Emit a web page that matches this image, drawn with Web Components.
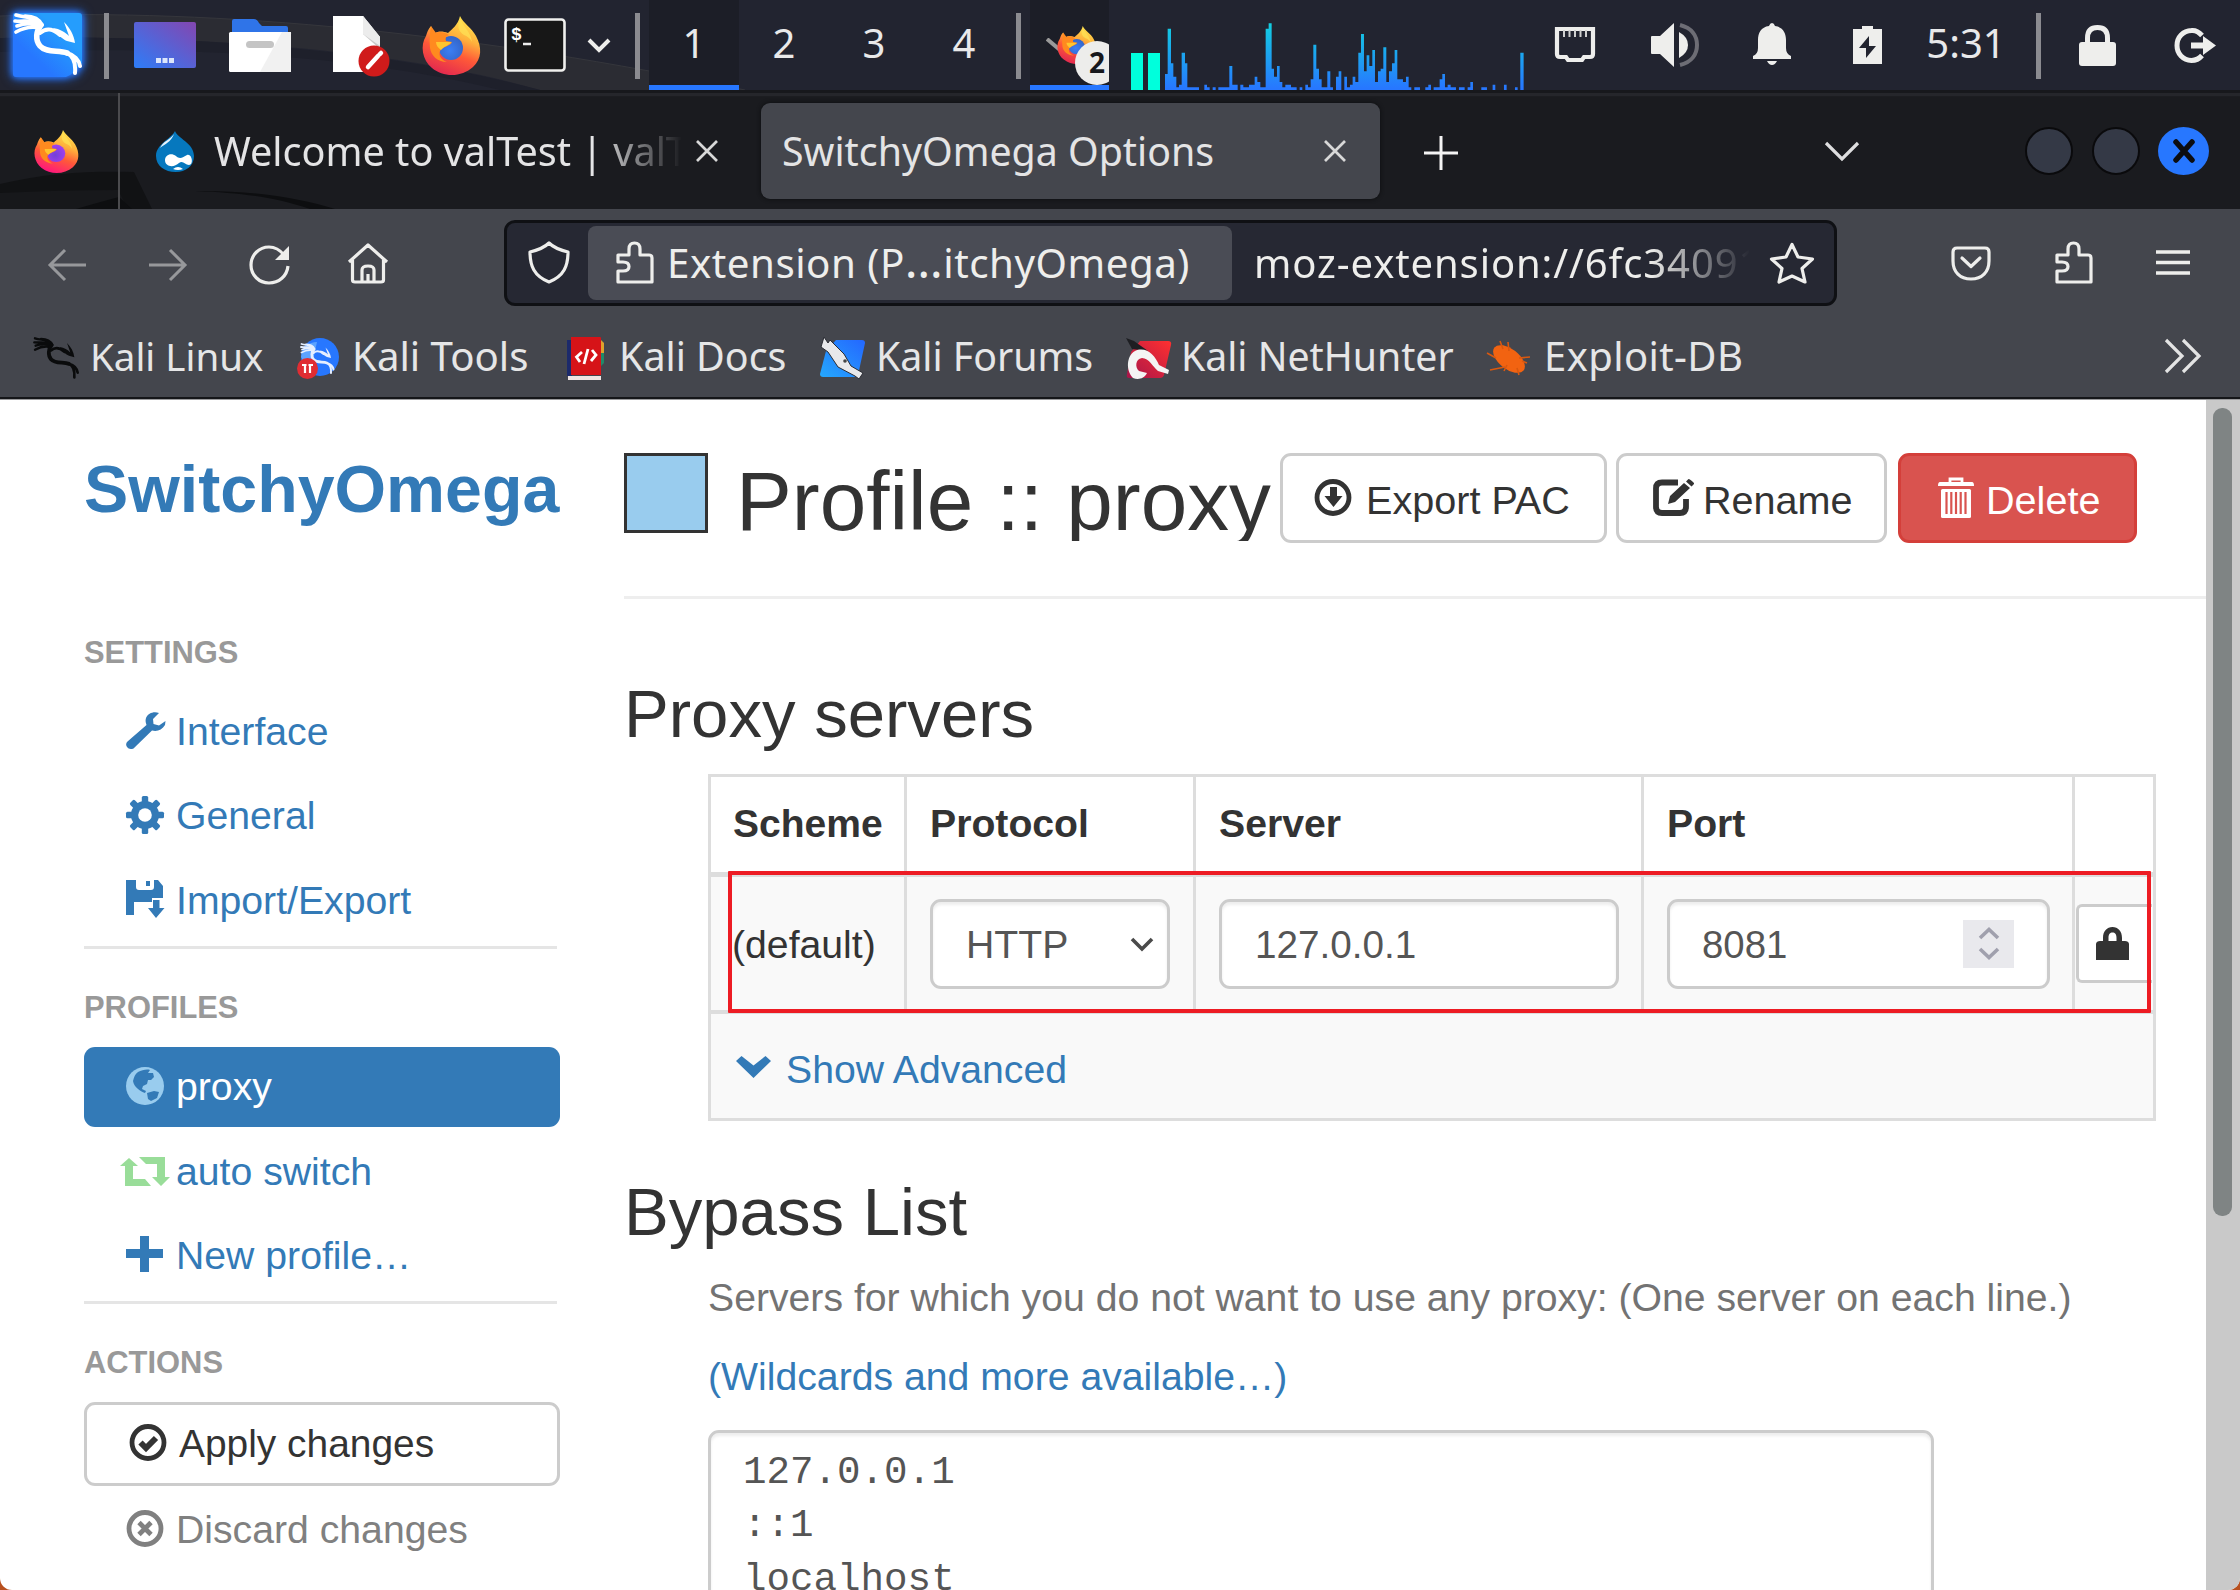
<!DOCTYPE html>
<html lang="en">
<head>
<meta charset="utf-8">
<title>SwitchyOmega Options</title>
<style>
html,body{margin:0;padding:0;background:#b8501f;width:2240px;height:1590px;overflow:hidden}
body{font-family:"Liberation Sans",Arial,sans-serif}
</style>
</head>
<body>
<desk-screen></desk-screen>
<script>
const DRAGON = (c) => `<g fill="none" stroke="${c}" stroke-linecap="round" stroke-linejoin="round">
<path stroke-width="3.6" d="M3 2C12 5 20 3 27 9M2 8C12 9 18 6 27 11M4 13C12 10 20 10 27 13M3 19C10 15 18 13 27 15M12 3C20 3 26 5 29 12"/>
<path stroke-width="5.600" d="M28 12C23 18 22 27 27 33C33 40 45 37 54 40"/>
<path stroke-width="4" d="M27 20C34 14 40 16 47 22M54 40C60 43 63 49 62 60M54 40C61 42 66 47 67 53"/>
</g><path fill="${c}" d="M40 15C47 16 52 19 56 23L51 9C57 15 61 22 62 30L54 28C49 26 45 22 40 15Z"/>`;
const FOX = (core, pink) => `<defs><linearGradient id="a" x1=".75" y1="0" x2=".35" y2="1"><stop offset="0" stop-color="#ffe94f"/><stop offset=".35" stop-color="#ffb03c"/><stop offset=".62" stop-color="#ff5a38"/><stop offset="1" stop-color="${pink}"/></linearGradient>
<radialGradient id="b" cx=".45" cy=".6" r=".6"><stop offset="0" stop-color="${core[0]}"/><stop offset="1" stop-color="${core[1]}"/></radialGradient></defs>
<path fill="url(#a)" d="M38 0C41 7 50 12 54 20C60 31 60 43 51 51C40 61 22 62 10 52C0 44-2 29 4 20C5 17 6 13 9 10C10 13 11 15 13 17C16 15 21 15 26 17C30 13 36 9 38 0Z"/>
<circle cx="29" cy="32" r="12" fill="url(#b)"/>
<path fill="#ff8a1f" d="M9 10L14 17C17 15 23 16 27 19C24 20 23 22 24 25L30 26C29 30 21 30 18 35C16 40 20 44 25 46C15 46 9 39 8 32C7 23 8 16 9 10Z"/>
<path fill="#ffc62e" d="M14 26L29 26C28 29 22 30 19 34C16 32 14 29 14 26Z"/>
<path fill="#ffe056" opacity=".75" d="M38 3C41 10 49 16 50 26C48 22 45 20 42 19C36 15 35 10 38 3Z"/>`;
const PUZZLE = `<path fill="none" stroke="currentColor" stroke-width="3.2" stroke-linejoin="round" d="M2 14H13V8C13 4 15 2 18.500 2S24 4 24 8V14H33C35 14 36 15 36 17V41H2V30H7C11 30 13 28 13 25.500S11 21 7 21H2Z"/>`;
const LOCKBODY = `<path fill="currentColor" d="M7 14V11C7 4 11 0 16.500 0S26 4 26 11V14H29C31 14 33 15 33 17V33H0V17C0 15 2 14 4 14ZM12.500 14H20.500V11C20.500 7 19 5.500 16.500 5.500S12.500 7 12.500 11Z"/>`;
const ring = `<circle cx="19" cy="18.500" r="16" fill="none" stroke="currentColor" stroke-width="4.800"/>`;

const ICONS = {
  kali: ['69 64', `<defs><linearGradient id="k" x1="0" y1="1" x2="1" y2="0"><stop offset=".3" stop-color="#2777ff"/><stop offset=".7" stop-color="#259dfd"/></linearGradient></defs><path fill="url(#k)" d="M2 0H66Q69 0 69 3V50Q60 62 53 64H3Q0 64 0 61V2Q0 0 2 0Z"/>${DRAGON('#fff')}`],
  desktop: ['62 46', `<defs><linearGradient id="d" x1="0" y1="1" x2="1" y2="0"><stop offset="0" stop-color="#2d7df8"/><stop offset="1" stop-color="#8446b0"/></linearGradient></defs><rect width="62" height="46" rx="2" fill="url(#d)"/><path d="M22 36h5v5h-5zM28.500 36h5v5h-5zM35 36h5v5h-5z" fill="#dce6fb"/>`],
  folder: ['62 53', `<path fill="#2f74e8" d="M3 2Q3 0 5 0H25Q28 0 30 4L33 7H57Q59 7 59 9V20H3Z"/><rect y="13" width="62" height="40" rx="1.500" fill="#fff"/><path fill="#f1f1f1" d="M53 13H62V53H31Z"/><rect x="17" y="22" width="28" height="7" rx="3.500" fill="#c4c4c4"/>`],
  doc: ['58 60', `<path fill="#fff" d="M1 0H31L48 21V56H1Z"/><path fill="#c9c9c9" d="M31 0L48 21V33L31 18Z"/><path fill="#ececec" d="M31 0V18L48 30V21Z"/><circle cx="42" cy="45" r="15.500" fill="#d01b1b"/><path d="M36 51L46 40M47.500 38.500L49 37" stroke="#fff" stroke-width="4.500" stroke-linecap="round"/>`],
  firefox: ['59 59', FOX(['#3b7ff5', '#3465c8'], '#e22850')],
  firefoxp: ['59 59', FOX(['#7240d8', '#a23ff0'], '#ff1480')],
  term: ['62 54', `<rect x="1.500" y="1.500" width="59" height="51" rx="3" fill="#171717" stroke="#f0f0ee" stroke-width="2.600"/><path d="M19 26H27" stroke="#eee" stroke-width="2.500"/>`],
  pchev: ['24 15', `<path d="M2 2L12 12L22 2" fill="none" stroke="#eeeeec" stroke-width="4"/>`],
  eth: ['40 35', `<path d="M2 2H38V27Q38 30 35 30H29L27 33H13L11 30H5Q2 30 2 27Z" fill="none" stroke="#eeeeec" stroke-width="4.200"/><path d="M9 3V10M14.500 3V10M20 3V10M25.500 3V10M31 3V10" stroke="#d0d0d0" stroke-width="2"/>`],
  vol: ['48 44', `<path fill="#eeeeec" d="M0 14Q0 13 1 13H9L23 0V44L9 31H1Q0 31 0 30Z"/><path fill="#eeeeec" d="M28 9Q37 14 37 22T28 35Z"/><path d="M29 2C41 5 46 13 46 22S41 39 29 42" fill="none" stroke="#6d6d75" stroke-width="4"/>`],
  bell: ['40 42', `<path fill="#eeeeec" d="M20 0Q22 0 23 3C31 4 34 10 34 17V25Q34 31 39 33V36H1V33Q6 31 6 25V17C6 10 9 4 17 3Q18 0 20 0Z"/><path fill="#eeeeec" d="M15 38H25Q23 42 20 42T15 38Z"/>`],
  batt: ['29 38', `<path fill="#eeeeec" d="M9 0H20V3H29V38H0V3H9Z"/><path fill="#22242f" d="M16 10L6 22H13V32L23 20H16Z"/>`],
  plock: ['37 41', `<path d="M8.500 20V13C8.500 6 12 2.500 18.500 2.500S28.500 6 28.500 13V20" fill="none" stroke="#eeeeec" stroke-width="5"/><rect y="17" width="37" height="24" rx="3" fill="#eeeeec"/>`],
  logout: ['42 35', `<path d="M28 7.500C24 3 20 2.200 17.500 2.500C9 3 3 9 3 17.500S9 32 17.500 32.500C22 32.500 25 31 28 27.500" fill="none" stroke="#eeeeec" stroke-width="5"/><path fill="#eeeeec" d="M17 14.500H29V8L42 17.500L29 27V20.500H17Z"/>`],
  drupal: ['39 41', `<path fill="#0678be" d="M19 0C21 7 38 12 38 25C38 35 30 41 19.500 41S0 35 0 25C0 13 15 8 19 0Z"/><path fill="#e8f4fc" d="M18 3C14 9 7 10 4 17C9 13 15 11 18 3Z"/><path fill="#fff" d="M9 29C9 24 15 21 20 25C24 29 27 26 31 24C36 22 38 34 33 34C29 34 27 29 23 32C18 37 9 36 9 29ZM17 38Q22 34 27 38Q22 40 17 38Z"/>`],
  x: ['24 24', `<path d="M2 2L22 22M22 2L2 22" stroke="#d8d8d8" stroke-width="2.700"/>`],
  plus1: ['36 36', `<path d="M18 1V35M1 18H35" stroke="#f4f4f4" stroke-width="3"/>`],
  tchev: ['36 21', `<path d="M2 2L18 18L34 2" fill="none" stroke="#dededf" stroke-width="3.200"/>`],
  back: ['40 34', `<path d="M39 17H3M18 2L3 17L18 32" fill="none" stroke="#97989b" stroke-width="3"/>`],
  fwd: ['40 34', `<path d="M1 17H37M22 2L37 17L22 32" fill="none" stroke="#97989b" stroke-width="3"/>`],
  reload: ['41 40', `<path d="M39 21C38 31 30 38 20 38C10 38 2 30 2 20S10 2 20 2C26 2 31 5 35 10" fill="none" stroke="#eeeeec" stroke-width="3.200"/><path fill="#eeeeec" d="M40 1V15H26Z"/>`],
  home: ['42 41', `<path d="M2 19L21 2L40 19M5.500 17V37Q5.500 39 8 39H34Q36.500 39 36.500 37V17M15 39V27Q15 23 21 23T27 27V39M21 31V39" fill="none" stroke="#eeeeec" stroke-width="3.200" stroke-linejoin="round"/>`],
  shield: ['42 43', `<path d="M21 2C25 6 32 9 40 11C40 25 36 35 21 41C6 35 2 25 2 11C10 9 17 6 21 2Z" fill="none" stroke="#eeeeec" stroke-width="3.200" stroke-linejoin="round"/>`],
  puzzle: ['38 43', PUZZLE],
  star: ['46 42', `<path d="M23 2.500L29 15L43.500 17L33 26.500L36 40L23 34L10 40L13 26.500L2.500 17L17 15Z" fill="none" stroke="#eeeeec" stroke-width="3.200" stroke-linejoin="round"/>`],
  pocket: ['40 35', `<path d="M6 2H34Q38 2 38 6V15C38 26 31 33 20 33S2 26 2 15V6Q2 2 6 2Z" fill="none" stroke="#eeeeec" stroke-width="3.200"/><path d="M11 12L20 20.500L29 12" fill="none" stroke="#eeeeec" stroke-width="3.200" stroke-linecap="round" stroke-linejoin="round"/>`],
  menu: ['34 25', `<path d="M0 2H34M0 12.500H34M0 23H34" stroke="#eeeeec" stroke-width="3.400"/>`],
  more: ['38 36', `<path d="M2 2L18 18L2 34M19 2L35 18L19 34" fill="none" stroke="#e4e4e4" stroke-width="3.200"/>`],
  bkali: ['69 64', DRAGON('#0a0b0c')],
  btools: ['42 41', `<circle cx="23" cy="19" r="19" fill="#2777ff"/><path fill="#6aaeff" d="M4 19C5 10 12 4 20 4L16 22L8 26Z" opacity=".8"/><g transform="translate(3 5) scale(.5)">${DRAGON('#e6efff')}</g><circle cx="10.500" cy="30.500" r="10.500" fill="#e02d33"/><path d="M5 27H9.500M11.500 27H16M8 27V35M13 27V35" stroke="#fff" stroke-width="2.200"/>`],
  bdocs: ['37 43', `<path fill="#1c2a6b" d="M0 3H5V39H0Z"/><path fill="#e0a22c" d="M33 2L37 6V16H33Z"/><path fill="#1f8a6a" d="M33 16H37V26L33 30Z"/><path fill="#d61318" d="M4 0H33Q34 0 34 1V38H4Z"/><path fill="#efe5e3" d="M1 39H34V43H1Z"/><path d="M15 15L9.500 20L13 25M25 13L29 18L24 24M21 12L17 27" fill="none" stroke="#fff" stroke-width="2.800"/>`],
  bforums: ['46 42', `<defs><linearGradient id="f" x1="0" y1="1" x2="1" y2="0"><stop offset="0" stop-color="#25a8fd"/><stop offset="1" stop-color="#2467ff"/></linearGradient></defs><path fill="url(#f)" d="M16 3H42Q45 3 45 6L38 38Q37 40 34 40H3Q0 40 0 37L6 14Z"/><path fill="#e8e8ea" stroke="#2a2c33" stroke-width="1" d="M1 10L4 0L8 6L10 3L24 17L31 29L43 36L39 42L35 39L18 30L8 15Z"/><circle cx="25" cy="24" r="1.800" fill="#444"/>`],
  bnet: ['46 41', `<defs><linearGradient id="n" x1="0" y1="1" x2="1" y2="0"><stop offset="0" stop-color="#a8154a"/><stop offset="1" stop-color="#ff3030"/></linearGradient></defs><path fill="url(#n)" d="M14 3H42Q46 3 45 7L38 37Q37 40 34 40H3Q0 40 1 36L5 14Z"/><path fill="#1d1e22" d="M0 0L8 3L22 13L6 11Z"/><path fill="#f4f4f4" d="M7 40C0 33 0 18 9 13C20 8 29 17 33 27L43 32L42 36L32 33C27 29 23 20 16 20C9 21 9 30 13 33L21 35C18 41 12 42 7 40Z"/>`],
  bexp: ['44 34', `<ellipse cx="22" cy="18" rx="18.500" ry="10" transform="rotate(38 22 18)" fill="#f26311"/><path d="M16 8L13 0M22 10L21 1M0 12L9 17M32 17L43 16M3 29L18 26M30 27L32 34M35 20L40 22M20 24L17 30" stroke="#d9580f" stroke-width="1.600"/>`],
  wrench: ['40 38', `<path fill="currentColor" d="M33 1C28-1 22 1 20 6C19 9 20 11 20.500 13L1.500 29.500Q-1 32 1 35T7.500 36.500L26 18.500C31 20 36 18 39 13L39.500 9L33 13.500L27.500 12L27 7Z"/>`],
  gear: ['38 38', `<g fill="currentColor"><circle cx="19" cy="19" r="14"/><rect x="15.800" y="0" width="6.400" height="38" rx="1.500"/><rect x="0" y="15.800" width="38" height="6.400" rx="1.500"/><g transform="rotate(45 19 19)"><rect x="15.800" y="0" width="6.400" height="38" rx="1.500"/><rect x="0" y="15.800" width="38" height="6.400" rx="1.500"/></g></g><circle cx="19" cy="19" r="6.800" fill="#fff"/>`],
  save: ['38 38', `<path fill="currentColor" d="M0 0H10V7Q10 10 13 10H25Q28 10 28 7V0H32L37 6V18H26V22H8V35H0Z"/><rect x="20" y="1" width="4" height="5" fill="currentColor"/><path fill="currentColor" d="M27 20H33.500V28H38.500L30 38L22 28H27Z"/>`],
  globe: ['38 38', `<circle cx="19" cy="19" r="19" fill="#9ce"/><path fill="#337ab7" d="M12 5C16 3 21 2 24 3L22 6L27 6L28 10L25 13L22 13L21 17L17 19L16 22L20 24L19 26C14 24 8 20 7 14C8 10 9 7 12 5ZM21 26L28 24L33 25L31 31L25 34L22 32Z"/>`],
  retweet: ['50 29', `<path fill="#9d9" d="M9 1L18 9H13V22H25L31 29H5V9H0ZM19 0H45V20H50L41 29L32 20H37V7H26Z"/>`],
  plus: ['37 36', `<path fill="currentColor" d="M14 0H23V13H37V22H23V36H14V22H0V13H14Z"/>`],
  ok: ['38 37', ring + `<path d="M11.500 18.500L17 24L27 14" fill="none" stroke="currentColor" stroke-width="6"/>`],
  remove: ['38 37', ring + `<path d="M13 12.500L25 24.500M25 12.500L13 24.500" stroke="currentColor" stroke-width="4.800"/>`],
  down: ['39 37', ring + `<path fill="currentColor" d="M16 8H23V17H28.500L19.500 28L10.500 17H16Z"/>`],
  edit: ['41 37', `<path d="M25 3.500H9Q3 3.500 3 9.500V28Q3 34 9 34H27Q33 34 33 28V20" fill="none" stroke="currentColor" stroke-width="5.800"/><path fill="currentColor" d="M15 25L17 17L31 4L37 9L22 23ZM33 2.500L35.500 0Q37 0 41 4V5L38.500 7.500Z"/>`],
  trash: ['36 41', `<path fill="none" stroke="#fff" stroke-width="2.800" d="M12 5V2H24V5"/><path fill="#fff" d="M2 5H34Q36 5 36 9H0Q0 5 2 5Z"/><rect x="3" y="12" width="30" height="29" rx="1.500" fill="#fff" /><path d="M8.500 15V37M13.300 15V37M18 15V37M22.700 15V37M27.500 15V37" stroke="#d9534f" stroke-width="2.200"/>`],
  schev: ['24 14', `<path d="M2 2L12 12L22 2" fill="none" stroke="#4a4a4a" stroke-width="3.600"/>`],
  lock: ['33 33', LOCKBODY],
  cdown: ['35 22', `<path fill="currentColor" d="M0 5L5.500 0L17.500 9.500L29.500 0L35 5L17.500 22Z"/>`],
  spin: ['22 33', `<path d="M2 11L11 2.500L20 11M2 22L11 30.500L20 22" fill="none" stroke="#a0a0ad" stroke-width="3.600"/>`],
};

/* Defines an element whose shadow root is cloned from a template. */
function define(name, css, html) {
  const tpl = document.createElement('template');
  tpl.innerHTML = `<style>${css}</style>${html}`;
  customElements.define(name, class extends HTMLElement {
    constructor() {
      super();
      this.attachShadow({ mode: 'open' }).append(tpl.content.cloneNode(true));
    }
  });
}

/* <ui-icon name w h>: vector icon, box size defaults to the viewBox. */
customElements.define('ui-icon', class extends HTMLElement {
  connectedCallback() {
    if (this.shadowRoot) return;
    const [box, body] = ICONS[this.getAttribute('name')];
    const [vw, vh] = box.split(' ');
    const w = this.getAttribute('w') || vw, h = this.getAttribute('h') || vh;
    this.attachShadow({ mode: 'open' }).innerHTML =
      `<style>:host{display:block;flex:none;width:${w}px;height:${h}px}svg{display:block;overflow:visible}</style>
       <svg width="${w}" height="${h}" viewBox="0 0 ${box}" preserveAspectRatio="none">${body}</svg>`;
  }
});

/* CPU history strip drawn from [start, end, top] triples. */
customElements.define('cpu-graph', class extends HTMLElement {
  connectedCallback() {
    if (this.shadowRoot) return;
    const d = '164,172,222 172,182,86 182,189,190 189,198,230 198,206,262 206,214,254 214,224,158 224,231,190 231,266,262 282,290,254 290,298,262 307,316,262 324,357,262 357,366,198 366,382,254 390,399,254 399,416,262 416,433,254 433,441,230 441,450,246 450,466,262 466,475,86 475,484,70 484,491,206 491,500,230 500,508,198 508,516,246 516,525,262 525,542,254 542,559,262 568,576,262 585,593,254 593,601,262 601,609,238 609,618,134 618,626,206 626,634,238 634,651,262 651,660,214 660,668,262 677,685,230 685,693,214 702,710,230 710,719,262 719,727,254 727,735,230 735,744,246 744,752,158 752,761,102 761,769,214 769,777,166 777,786,198 786,794,150 794,803,246 803,811,214 811,819,206 819,828,142 828,836,246 836,845,214 845,853,190 853,861,150 861,878,238 878,887,246 887,895,230 895,903,262 912,929,262 945,954,262 954,962,254 970,988,262 988,996,238 996,1004,222 1004,1012,262 1012,1021,254 1021,1037,262 1046,1063,262 1072,1080,262 1080,1088,246 1113,1130,262 1147,1155,254 1181,1189,254 1214,1222,262 1230,1240,158'
      .split(' ').map(s => { const [a, b, t] = s.split(','); return `M${a} 270V${t}H${b}V270Z`; }).join('');
    this.attachShadow({ mode: 'open' }).innerHTML = `<style>:host{display:block;flex:none}svg{display:block}</style>
      <svg width="359.300" height="67" viewBox="164 69 1078 201"><defs><linearGradient id="g" gradientUnits="userSpaceOnUse" x1="0" y1="70" x2="0" y2="265"><stop offset="0" stop-color="#12cfe0"/><stop offset="1" stop-color="#2777ff"/></linearGradient></defs><path fill="url(#g)" d="${d}"/></svg>`;
  }
});

define('panel-sep', `:host{display:block;flex:none;width:5px;height:66px;margin-top:13px;background:#8b8b90}`, ``);

define('work-space', `:host{display:block;box-sizing:border-box;flex:none;width:90px;height:90px;text-align:center;font-size:40px;line-height:86px;color:#e9e9ea}
:host([active]){background:#1c1e27;border-bottom:5px solid #2777ff}`, `<slot></slot>`);

define('top-panel', `:host{display:flex;position:relative;align-items:flex-start;height:90px;background:#222430;font-family:"Noto Sans",sans-serif;overflow:hidden}
.wall{position:absolute;left:0;top:0}
.row{position:relative;display:flex;align-items:flex-start;width:2240px}
.glow{filter:drop-shadow(0 0 3px #2777ff) drop-shadow(0 0 5px #2777ff)}
.term{position:relative}.term span{position:absolute;left:7px;top:6px;font:700 18px/22px "Liberation Mono",monospace;color:#fff}
.task{position:relative;flex:none;box-sizing:border-box;width:79px;height:90px;margin-left:8px;background:#1c1e27;border-bottom:5px solid #2777ff;overflow:hidden}
.task .line{position:absolute;left:16px;top:38px}
.task ui-icon{position:absolute;left:27px;top:26px}
.task b{position:absolute;left:45px;top:41px;width:44px;height:44px;border-radius:50%;background:#ededeb;color:#17181c;font-size:28px;line-height:43px;text-align:center}
.bar{flex:none;width:12px;height:37px;margin-top:53px;background:#00ffdc}
.time{flex:none;width:79px;font-size:40px;line-height:86px;color:#e9e9ea;white-space:nowrap}`,
`<svg class="wall" width="800" height="90"><path fill="#2b2c33" d="M0 16C220 8 480 34 745 90H540C400 50 200 34 0 38Z"/><path fill="none" stroke="#35363c" d="M0 16C220 8 480 34 745 90"/><path fill="#1e202b" d="M0 38C200 34 400 52 540 90H500C360 56 200 46 0 52Z"/></svg>
<div class="row">
<ui-icon class="glow" name="kali" style="margin:13px 0 0 13px"></ui-icon>
<panel-sep style="margin-left:22px"></panel-sep>
<ui-icon name="desktop" style="margin:22px 0 0 25px"></ui-icon>
<ui-icon name="folder" style="margin:19px 0 0 33px"></ui-icon>
<ui-icon name="doc" style="margin:16px 0 0 41px"></ui-icon>
<ui-icon name="firefox" style="margin:16px 0 0 32px"></ui-icon>
<div class="term" style="margin:18px 0 0 23px"><ui-icon name="term"></ui-icon><span>$</span></div>
<ui-icon name="pchev" style="margin:38px 0 0 21px"></ui-icon>
<panel-sep style="margin-left:24px"></panel-sep>
<work-space active style="margin-left:9px">1</work-space><work-space>2</work-space><work-space>3</work-space><work-space>4</work-space>
<panel-sep style="margin-left:7px"></panel-sep>
<div class="task" style="margin-left:9px"><svg class="line" width="16" height="14"><path d="M1 1L14 12" stroke="#9a9a9a" stroke-width="4"/></svg><ui-icon name="firefox" w="40" h="38"></ui-icon><b>2</b></div>
<div class="bar" style="margin-left:22px"></div><div class="bar" style="margin-left:5px"></div>
<cpu-graph style="margin:23px 0 0 5px"></cpu-graph>
<ui-icon name="eth" style="margin:27px 0 0 31px"></ui-icon>
<ui-icon name="vol" style="margin:23px 0 0 56px"></ui-icon>
<ui-icon name="bell" style="margin:23px 0 0 53px"></ui-icon>
<ui-icon name="batt" style="margin:26px 0 0 61px"></ui-icon>
<div class="time" style="margin-left:44px">5:31</div>
<panel-sep style="margin-left:31px"></panel-sep>
<ui-icon name="plock" style="margin:25px 0 0 38px"></ui-icon>
<ui-icon name="logout" style="margin:28px 0 0 58px"></ui-icon>
</div>`);

define('browser-tab', `:host{display:flex;align-items:center;flex:none;box-sizing:border-box;height:96px;border-radius:9px;color:#e4e4e5;font-size:39.6px;white-space:nowrap}
:host([selected]){background:#44464d;font-size:39.3px;box-shadow:0 0 4px #0c0d0f}
.t{flex:1;min-width:0;overflow:hidden;line-height:96px}
:host([fade]) .t{-webkit-mask-image:linear-gradient(90deg,#000 380px,transparent 468px);mask-image:linear-gradient(90deg,#000 380px,transparent 468px)}`,
`<slot name="icon"></slot><div class="t"><slot></slot></div><ui-icon name="x"></ui-icon>`);

define('tab-strip', `:host{display:block;position:relative;height:119px;background:#1a1b1f;font-family:"Noto Sans",sans-serif;overflow:hidden}
.edge{height:7px;box-sizing:border-box;background:#25262b;border-top:3px solid #17181c;border-bottom:1px solid #1c1d21}
.wall{position:absolute;left:0;top:0}
.row{position:relative;display:flex;align-items:center;height:112px;padding-bottom:4px;box-sizing:border-box}
.v{flex:none;width:2px;height:116px;background:#4b4b4e}
.c{flex:none;box-sizing:border-box;width:48px;height:48px;border-radius:50%;background:#343946;border:2px solid #0a0a0c}
.c.b{width:51px;background:#2777ff;border:0;display:flex;align-items:center;justify-content:center}`,
`<svg class="wall" width="400" height="119"><path fill="#111214" d="M0 94C50 82 95 81 134 82L152 119H0Z"/><path fill="#17181b" d="M0 103Q60 100 118 100L128 119H0Z"/><path fill="#0d0e10" d="M76 119Q100 112 119 107L132 119ZM195 101C250 100 300 108 335 119H310C270 106 240 103 195 101Z"/></svg>
<div class="edge"></div>
<div class="row">
<ui-icon name="firefoxp" w="45" h="43" style="margin-left:34px"></ui-icon>
<div class="v" style="margin-left:39px"></div>
<browser-tab fade style="width:563px;margin-left:36px"><ui-icon slot="icon" name="drupal" style="margin-right:19px"></ui-icon>Welcome to valTest | valTest</browser-tab>
<browser-tab selected style="width:619px;margin-left:42px;padding:0 33px 0 21px">SwitchyOmega Options</browser-tab>
<ui-icon name="plus1" style="margin:3px 0 0 43px"></ui-icon>
<ui-icon name="tchev" style="margin-left:365px"></ui-icon>
<div class="c" style="margin-left:165px"></div><div class="c" style="margin-left:19px"></div>
<div class="c b" style="margin-left:18px"><svg width="24" height="24"><path d="M4 3L20 21M20 3L4 21" stroke="#0c0d10" stroke-width="5.500" stroke-linecap="round"/></svg></div>
</div>`);

define('nav-bar', `:host{display:flex;align-items:center;height:107px;color:#eeeeec;font-family:"Noto Sans",sans-serif;font-size:40px;white-space:nowrap}
.url{flex:none;box-sizing:border-box;display:flex;align-items:center;width:1333px;height:86px;margin-left:115px;border:3px solid #0f1014;border-radius:11px;background:#262833}
.id{flex:none;box-sizing:border-box;display:flex;align-items:center;width:644px;height:74px;margin-left:18px;padding-left:28px;border-radius:8px;background:#4a4c55}
.id span{margin-left:13px;font-size:40.3px;letter-spacing:.5px}.id i{font-style:normal;font-size:48px;line-height:0}
.u{flex:none;width:500px;margin-left:22px;overflow:hidden;font-size:40px;letter-spacing:.9px;-webkit-mask-image:linear-gradient(90deg,#000 395px,transparent 496px);mask-image:linear-gradient(90deg,#000 395px,transparent 496px)}`,
`<ui-icon name="back" style="margin:4px 0 0 47px"></ui-icon>
<ui-icon name="fwd" style="margin:4px 0 0 61px"></ui-icon>
<ui-icon name="reload" style="margin:4px 0 0 61px"></ui-icon>
<ui-icon name="home" style="margin:2px 0 0 57px"></ui-icon>
<div class="url"><ui-icon name="shield" style="margin-left:21px"></ui-icon>
<div class="id"><ui-icon name="puzzle"></ui-icon><span>Extension (P<i>…</i>itchyOmega)</span></div>
<div class="u">moz-extension://6fc34091</div><ui-icon name="star" style="margin-left:15px"></ui-icon></div>
<ui-icon name="pocket" style="margin:2px 0 0 114px"></ui-icon>
<ui-icon name="puzzle" style="margin-left:64px"></ui-icon>
<ui-icon name="menu" style="margin-left:63px"></ui-icon>`);

define('book-mark', `:host{display:flex;align-items:center;flex:none;font-size:39.4px;line-height:54px;color:#e6e6e7}`, `<slot></slot>`);
define('bookmark-bar', `:host{display:flex;align-items:center;height:84px;padding-bottom:4px;box-sizing:border-box;font-family:"Noto Sans",sans-serif;white-space:nowrap}
book-mark ui-icon{margin:4px 0 0 0}`,
`<book-mark style="width:264px;margin-left:33px"><ui-icon name="bkali" w="46" h="43"></ui-icon><span style="margin-left:11px;font-size:38.500px">Kali Linux</span></book-mark>
<book-mark style="width:270px"><ui-icon name="btools"></ui-icon><span style="margin-left:13px;font-size:40.200px">Kali Tools</span></book-mark>
<book-mark style="width:253px"><ui-icon name="bdocs"></ui-icon><span style="margin-left:15px">Kali Docs</span></book-mark>
<book-mark style="width:306px"><ui-icon name="bforums"></ui-icon><span style="margin-left:10px;font-size:39.300px">Kali Forums</span></book-mark>
<book-mark style="width:361px"><ui-icon name="bnet"></ui-icon><span style="margin-left:9px;font-size:39.200px">Kali NetHunter</span></book-mark>
<book-mark style="width:677px"><ui-icon name="bexp"></ui-icon><span style="margin-left:13px;font-size:40px;letter-spacing:.4px">Exploit-DB</span></book-mark>
<ui-icon name="more"></ui-icon>`);

define('side-item', `:host{display:flex;flex:none;align-items:center;box-sizing:border-box;height:80px;margin-bottom:4.4px;border-radius:11px;color:#337ab7;font-size:39.2px;line-height:80px}
:host([active]){background:#337ab7;color:#fff}
:host([apply]){height:84px;margin-bottom:4px;border:3px solid #ccc;color:#333;font-size:38.900px;line-height:78px}
:host([muted]){color:#808080}
.i{flex:none;width:92px;display:flex;align-items:center;justify-content:flex-start;box-sizing:border-box;padding:0 0 3px 42px}
:host([wide]) .i{padding-left:36px;padding-bottom:0}`, `<div class="i"><slot name="icon"></slot></div><slot></slot>`);
define('side-title', `:host{display:block;flex:none;height:40px;font-size:30.900px;font-weight:700;line-height:40px;color:#999;text-transform:uppercase}`, `<slot></slot>`);
define('side-rule', `:host{display:block;flex:none;height:3px;width:473px;margin:1px 0 39px;background:#e5e5e5}`, ``);

define('side-nav', `:host{display:flex;flex-direction:column;flex:none;width:476px;padding:49px 0 0 84px}
h1{margin:0 0 104px;font-size:66.300px;line-height:80px;color:#337ab7}
side-title{margin-bottom:19px}`,
`<h1>SwitchyOmega</h1>
<side-title>Settings</side-title>
<side-item><ui-icon slot="icon" name="wrench"></ui-icon>Interface</side-item>
<side-item><ui-icon slot="icon" name="gear"></ui-icon>General</side-item>
<side-item><ui-icon slot="icon" name="save"></ui-icon>Import/Export</side-item>
<side-rule></side-rule>
<side-title>Profiles</side-title>
<side-item active><ui-icon slot="icon" name="globe"></ui-icon>proxy</side-item>
<side-item wide><ui-icon slot="icon" name="retweet"></ui-icon>auto switch</side-item>
<side-item><ui-icon slot="icon" name="plus"></ui-icon>New profile…</side-item>
<side-rule></side-rule>
<side-title>Actions</side-title>
<side-item apply><ui-icon slot="icon" name="ok"></ui-icon>Apply changes</side-item>
<side-item muted><ui-icon slot="icon" name="remove"></ui-icon>Discard changes</side-item>`);

define('push-button', `:host{display:flex;flex:none;align-items:center;box-sizing:border-box;height:90px;border:3px solid #ccc;border-radius:11px;background:#fff;color:#333;font-size:39.600px;line-height:84px;white-space:nowrap}
:host([danger]){background:#d9534f;border-color:#d43f3a;color:#fff}
span{padding-top:3px}`, `<slot name="icon"></slot><span><slot></slot></span>`);

define('proxy-table', `:host{display:block;position:relative;box-sizing:border-box;width:1448px;margin-left:84px;font-size:39.200px;color:#333}
.r{display:grid;grid-template-columns:193px 289px 448px 431px 1fr;box-sizing:border-box;border:3px solid #ddd;border-bottom:0}
.r>div{box-sizing:border-box;border-left:3px solid #ddd;display:flex;align-items:center}
.r>div:first-child{border-left:0}
.h{height:98px;font-weight:700}.h>div{padding:0 0 1px 23px}.h>div:first-child{padding-left:22px}
.h .s{font-size:39px}
.d{height:138px;background:#f9f9f9;border-top-width:5px}
.d>div{padding-left:23px}
.d>div:first-child{padding:3px 0 0 21px}.d>div.l{padding-left:1px}
.a{box-sizing:border-box;height:111px;background:#f9f9f9;border:3px solid #ddd;border-top-width:4px;display:flex;align-items:center;padding:7px 0 0 25px;color:#337ab7}
.f{box-sizing:border-box;display:flex;align-items:center;height:90px;border:3px solid #ccc;border-radius:11px;background:#fff;color:#555;box-shadow:inset 0 3px 3px rgba(0,0,0,.07);padding-left:33px}
.f span{padding-top:3px}
.sp{display:flex;align-items:center;justify-content:center;width:51px;height:48px;background:#e9e9ed}
.k{box-sizing:border-box;display:flex;align-items:center;width:76px;height:79px;border:3px solid #ccc;border-right:0;border-radius:6px 0 0 6px;background:#fff;padding-left:17px;color:#333}
.mark{position:absolute;box-sizing:border-box;left:20px;top:97px;width:1423px;height:142px;border:4px solid #ed1c24;border-radius:1px}`,
`<div class="r h"><div class="s">Scheme</div><div>Protocol</div><div>Server</div><div>Port</div><div></div></div>
<div class="r d"><div>(default)</div>
<div><div class="f" style="width:240px"><span style="flex:1">HTTP</span><ui-icon name="schev" style="margin-right:13px"></ui-icon></div></div>
<div><div class="f" style="width:400px"><span style="font-size:38.700px">127.0.0.1</span></div></div>
<div><div class="f" style="width:383px;padding-left:32px"><span style="flex:1;font-size:38.400px">8081</span><div class="sp" style="margin-right:33px"><ui-icon name="spin"></ui-icon></div></div></div>
<div class="l"><div class="k"><ui-icon name="lock"></ui-icon></div></div></div>
<div class="a"><ui-icon name="cdown" style="margin-bottom:5px"></ui-icon><span style="margin-left:15px">Show Advanced</span></div>
<div class="mark"></div>`);

define('profile-view', `:host{display:block;flex:none;width:1582px;margin-left:64px;color:#333}
header{display:flex;align-items:flex-start;box-sizing:border-box;height:199px;padding-top:53px;border-bottom:3px solid #eee}
.sw{flex:none;box-sizing:border-box;width:84px;height:80px;border:3px solid #333;background:#9ce}
h2{flex:none;margin:0 0 0 28px;width:544px;height:88px;overflow:hidden;font-weight:400;font-size:83.700px;line-height:97px;white-space:nowrap}
h3{margin:0;font-weight:400;font-size:67.100px;line-height:80px}
p{margin:0 0 0 84px;font-size:39.200px;line-height:56px;color:#737373;white-space:nowrap}
p.w{color:#337ab7;margin-top:23px}
pre{box-sizing:border-box;width:1226px;height:300px;margin:25px 0 0 84px;padding:13px 0 0 32px;border:3px solid #ccc;border-radius:11px;background:#fff;box-shadow:inset 0 3px 3px rgba(0,0,0,.07);color:#555;font:39.200px/53.300px "Liberation Mono",monospace}`,
`<header><div class="sw"></div><h2>Profile :: proxy</h2>
<push-button style="width:327px;padding-left:31px"><ui-icon slot="icon" name="down" style="margin:0 13px 2px 0"></ui-icon>Export PAC</push-button>
<push-button style="width:271px;margin-left:9px;padding-left:34px"><ui-icon slot="icon" name="edit" style="margin:0 9px 2px 0"></ui-icon>Rename</push-button>
<push-button danger style="width:239px;margin-left:11px;padding-left:37px"><ui-icon slot="icon" name="trash" style="margin:0 12px 2px 0"></ui-icon>Delete</push-button></header>
<h3 style="margin:75px 0 20px">Proxy servers</h3>
<proxy-table></proxy-table>
<h3 style="margin:51px 0 18px">Bypass List</h3>
<p>Servers for which you do not want to use any proxy: (One server on each line.)</p>
<p class="w">(Wildcards and more available…)</p>
<pre>127.0.0.1
::1
localhost</pre>`);

define('scroll-bar', `:host{display:block;flex:none;box-sizing:border-box;width:34px;height:1190px;padding:8px 8px 0 7px;background:#c9c9c9}
div{height:808px;border-radius:9px;background:#7f8484}`, `<div></div>`);

define('desk-screen', `:host{display:block;width:2240px;height:1590px;overflow:hidden}
.win{display:block;background:#44464d}
.page{display:flex;align-items:flex-start;height:1190px;overflow:hidden;background:#fff;border-radius:0 0 12px 12px}
.line{height:3px;margin-top:-3px;border-bottom:1px solid #9b9b9d;background:#151619;box-sizing:border-box}`,
`<top-panel></top-panel><div class="win"><tab-strip></tab-strip><nav-bar></nav-bar><bookmark-bar></bookmark-bar></div>
<div class="line"></div>
<div class="page"><side-nav></side-nav><profile-view></profile-view><scroll-bar></scroll-bar></div>`);
</script>
</body>
</html>
